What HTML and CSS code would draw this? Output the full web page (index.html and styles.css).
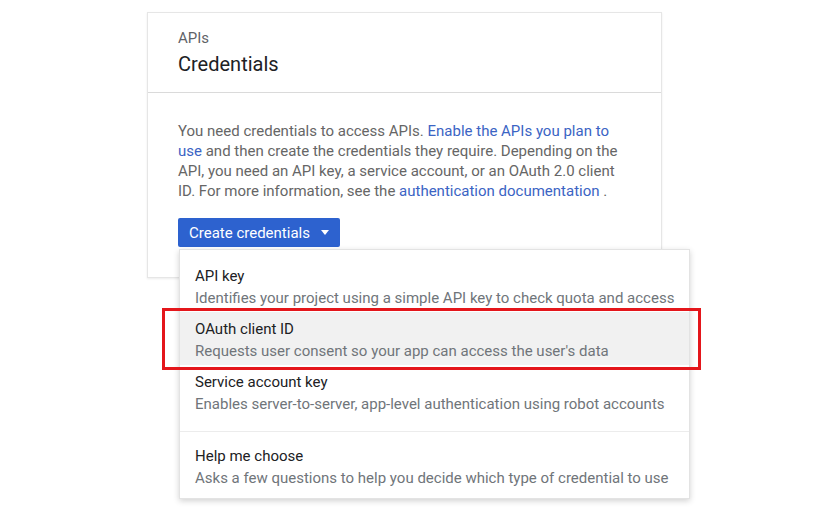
FILE: index.html
```html
<!DOCTYPE html>
<html>
<head>
<meta charset="utf-8">
<link rel="stylesheet" href="styles.css">
</head>
<body>
<div class="card">
  <div class="card-header">
    <div class="eyebrow">APIs</div>
    <div class="title">Credentials</div>
  </div>
  <div class="card-body">
    <p class="intro">You need credentials to access APIs. <a href="#">Enable the APIs you plan to use</a> and then create the credentials they require. Depending on the API, you need an API key, a service account, or an OAuth 2.0 client ID. For more information, see the <a href="#">authentication documentation</a> .</p>
    <div class="btn-wrap">
      <button class="btn">Create credentials <span class="caret"></span></button>
      <div class="menu">
        <div class="item">
          <div class="item-title">API key</div>
          <div class="item-desc">Identifies your project using a simple API key to check quota and access</div>
        </div>
        <div class="item active">
          <div class="item-title">OAuth client ID</div>
          <div class="item-desc">Requests user consent so your app can access the user's data</div>
          <div class="annot"></div>
        </div>
        <div class="item">
          <div class="item-title">Service account key</div>
          <div class="item-desc">Enables server-to-server, app-level authentication using robot accounts</div>
        </div>
        <div class="divider"></div>
        <div class="item">
          <div class="item-title">Help me choose</div>
          <div class="item-desc">Asks a few questions to help you decide which type of credential to use</div>
        </div>
      </div>
    </div>
  </div>
</div>
</body>
</html>
```

FILE: styles.css
```css
html, body {
  margin: 0;
  padding: 0;
  background: #fff;
}
body {
  min-height: 511px;
  font-family: Roboto, "Liberation Sans", Arial, sans-serif;
  color: #5f6368;
}
.card {
  margin: 12px 0 0 147px;
  width: 515px;
  box-sizing: border-box;
  border: 1px solid #e6e6e6;
  box-shadow: 0 1px 2px rgba(0,0,0,0.08);
  background: #fff;
}
.card-header {
  padding: 17px 30px 15px;
  border-bottom: 1px solid #dadada;
}
.eyebrow {
  font-size: 15px;
  line-height: 16px;
  color: #5f6368;
}
.title {
  margin-top: 5px;
  font-size: 20px;
  line-height: 26px;
  color: #202124;
}
.card-body {
  padding: 28px 30px 30px;
}
.intro {
  margin: 0;
  font-size: 15px;
  line-height: 20px;
  color: #666;
}
.intro a {
  color: #3b64c4;
  text-decoration: none;
}
.btn-wrap {
  position: relative;
  margin-top: 17px;
}
.btn {
  display: inline-flex;
  align-items: center;
  height: 29px;
  padding: 0 11px 0 11px;
  border: 0;
  border-radius: 2px;
  background: #2d62cf;
  color: #fff;
  font-family: inherit;
  font-size: 15px;
}
.caret {
  display: inline-block;
  margin-left: 11px;
  width: 0;
  height: 0;
  border-left: 4.5px solid transparent;
  border-right: 4.5px solid transparent;
  border-top: 5px solid #fff;
}
.menu {
  position: absolute;
  left: 1px;
  top: 31px;
  width: 511px;
  box-sizing: border-box;
  padding: 9px 0 6px;
  background: #fff;
  border: 1px solid #e3e3e3;
  box-shadow: 0 2px 6px rgba(0,0,0,0.18);
  z-index: 2;
}
.item {
  position: relative;
  padding: 6px 15px 3px;
  white-space: nowrap;
}
.item.active {
  background: #f1f1f1;
}
.item-title {
  font-size: 15px;
  line-height: 22px;
  color: #202124;
}
.item-desc {
  font-size: 15px;
  line-height: 22px;
  color: #70757a;
}
.divider {
  margin: 13px 0 7px;
  border-top: 1px solid #ececec;
}
.annot {
  position: absolute;
  left: -18px;
  right: -12px;
  top: -4px;
  bottom: -5px;
  border: 3px solid #e4161b;
}
```
